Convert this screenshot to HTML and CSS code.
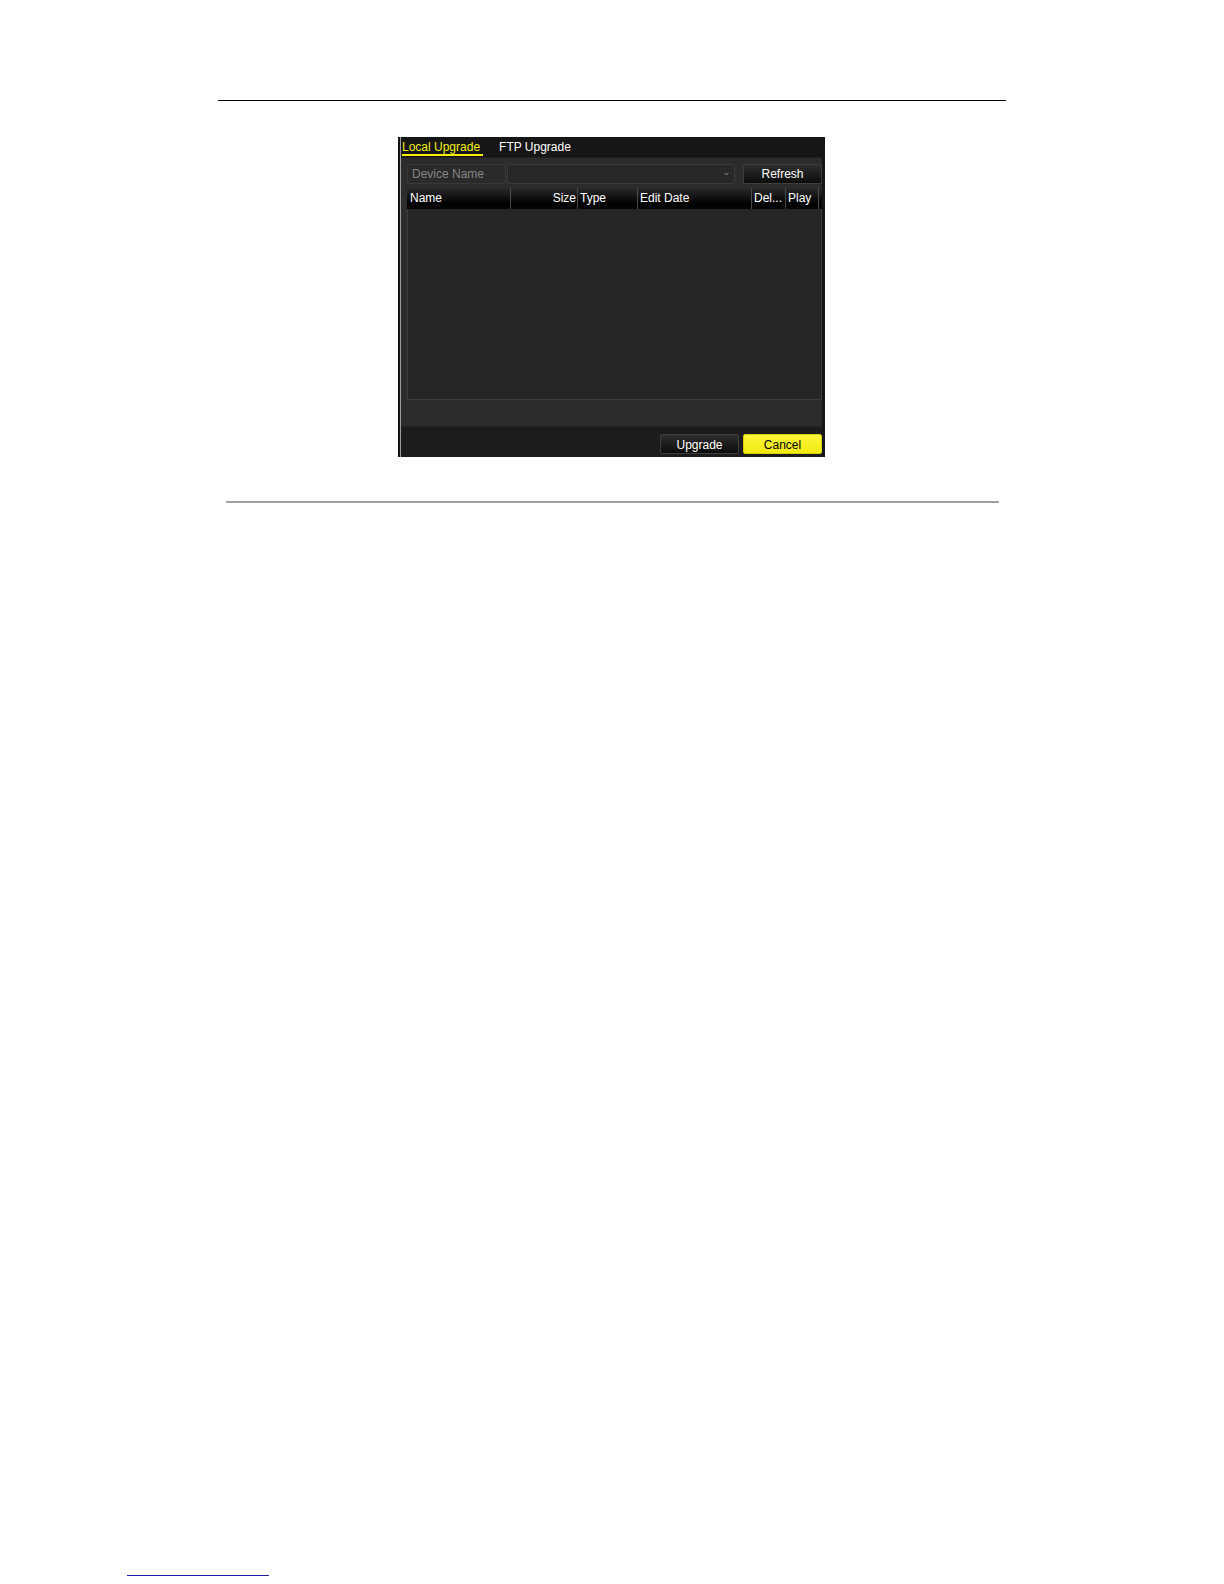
FILE: index.html
```html
<!DOCTYPE html>
<html>
<head>
<meta charset="utf-8">
<link rel="stylesheet" href="styles.css">
</head>
<body>
<div class="page">
  <div class="top-rule"></div>
  <div class="shot">
    <div class="shot-inner">
      <div class="tabs">
        <span class="tab active">Local Upgrade</span>
        <span class="tab">FTP Upgrade</span>
      </div>
      <div class="content">
        <div class="device-row">
          <div class="dev-label">Device Name</div>
          <div class="dev-select">
            <svg class="arrow" width="5" height="4" viewBox="0 0 5 4"><path d="M0.5 0.8 L2.5 2.8 L4.5 0.8" fill="none" stroke="#9a9a9a" stroke-width="1"/></svg>
          </div>
          <div class="btn refresh">Refresh</div>
        </div>
        <div class="table">
          <div class="thead">
            <div class="th c-name">Name</div>
            <div class="th c-size">Size</div>
            <div class="th c-type">Type</div>
            <div class="th c-date">Edit Date</div>
            <div class="th c-del">Del...</div>
            <div class="th c-play">Play</div>
            <div class="th c-rest"></div>
          </div>
          <div class="tbody"></div>
        </div>
      </div>
      <div class="footer-bar">
        <div class="btn upgrade">Upgrade</div>
        <div class="btn cancel">Cancel</div>
      </div>
    </div>
  </div>
  <div class="gray-rule"></div>
  <div class="blue-rule"></div>
</div>
</body>
</html>
```

FILE: styles.css
```css
html, body {
  margin: 0;
  padding: 0;
  background: #ffffff;
}
body {
  font-family: "Liberation Sans", Arial, sans-serif;
}
.page {
  padding-top: 100px;
}
.top-rule {
  margin-left: 218px;
  width: 788px;
  height: 1px;
  background: #000;
}
.shot {
  margin-top: 36px;
  margin-left: 398px;
  width: 427px;
  height: 320px;
  box-sizing: border-box;
  border-left: 2px solid #141414;
  border-right: 3px solid #161616;
  background: #161616;
}
.shot-inner {
  height: 100%;
  border-left: 1px solid #9c9c9c;
  display: flex;
  flex-direction: column;
  font-size: 12px;
  color: #fff;
}
.tabs {
  height: 20px;
  background: #161616;
  display: flex;
  align-items: flex-start;
  padding-left: 1px;
}
.tab {
  display: inline-block;
  line-height: 14px;
  padding-top: 3px;
  color: #ffffff;
}
.tab.active {
  color: #f4f000;
  border-bottom: 2px solid #f4f000;
  padding-right: 3px;
  margin-right: 16px;
}
.content {
  height: 269px;
  box-sizing: border-box;
  background: #2c2c2c;
  padding: 6px 0 0 6px;
  border-top: 1px solid #1f1f1f;
}
.device-row {
  display: flex;
  height: 20px;
}
.dev-label {
  width: 99px;
  box-sizing: border-box;
  border: 1px solid #383838;
  border-radius: 2px;
  background: #2a2a2a;
  color: #858585;
  line-height: 18px;
  padding-left: 4px;
}
.dev-select {
  width: 228px;
  margin-left: 1px;
  box-sizing: border-box;
  border: 1px solid #3a3a3a;
  border-radius: 3px;
  background: #282828;
  display: flex;
  justify-content: flex-end;
  align-items: center;
  padding-right: 5px;
}
.btn {
  height: 20px;
  box-sizing: border-box;
  text-align: center;
  line-height: 19px;
  border-radius: 2px;
}
.refresh, .upgrade {
  width: 79px;
  border: 1px solid #3e3e3e;
  background: linear-gradient(#2e2e2e, #0c0c0c);
  color: #fff;
}
.refresh {
  margin-left: 8px;
}
.table {
  margin-top: 4px;
  width: 415px;
}
.thead {
  display: flex;
  height: 21px;
  background: linear-gradient(#2a2a2a, #030303 70%);
}
.th {
  box-sizing: border-box;
  border-right: 1px solid #4a4a4a;
  line-height: 21px;
  padding-left: 2px;
  white-space: nowrap;
}
.c-name { width: 104px; padding-left: 3px; }
.c-size { width: 67px; text-align: right; padding-right: 1px; }
.c-type { width: 60px; }
.c-date { width: 114px; }
.c-del { width: 34px; }
.c-play { width: 33px; }
.c-rest { width: 3px; border-right: none; }
.tbody {
  height: 191px;
  box-sizing: border-box;
  background: #262626;
  border: 1px solid #3c3c3c;
  border-top: none;
}
.footer-bar {
  height: 31px;
  box-sizing: border-box;
  background: #1c1c1c;
  border-top: 1px solid #242424;
  display: flex;
  justify-content: flex-end;
  align-items: flex-start;
  padding-top: 7px;
  gap: 4px;
}
.upgrade {
  height: 20px;
  line-height: 20px;
}
.cancel {
  width: 79px;
  height: 20px;
  line-height: 20px;
  background: linear-gradient(#fbf63a, #f2ea10);
  border: 1px solid #d8d000;
  color: #000;
}
.gray-rule {
  margin-top: 44px;
  margin-left: 226px;
  width: 773px;
  height: 2px;
  background: #a0a0a0;
}
.blue-rule {
  margin-top: 1072px;
  margin-left: 127px;
  width: 142px;
  height: 1px;
  background: #1c1ca0;
}
```
